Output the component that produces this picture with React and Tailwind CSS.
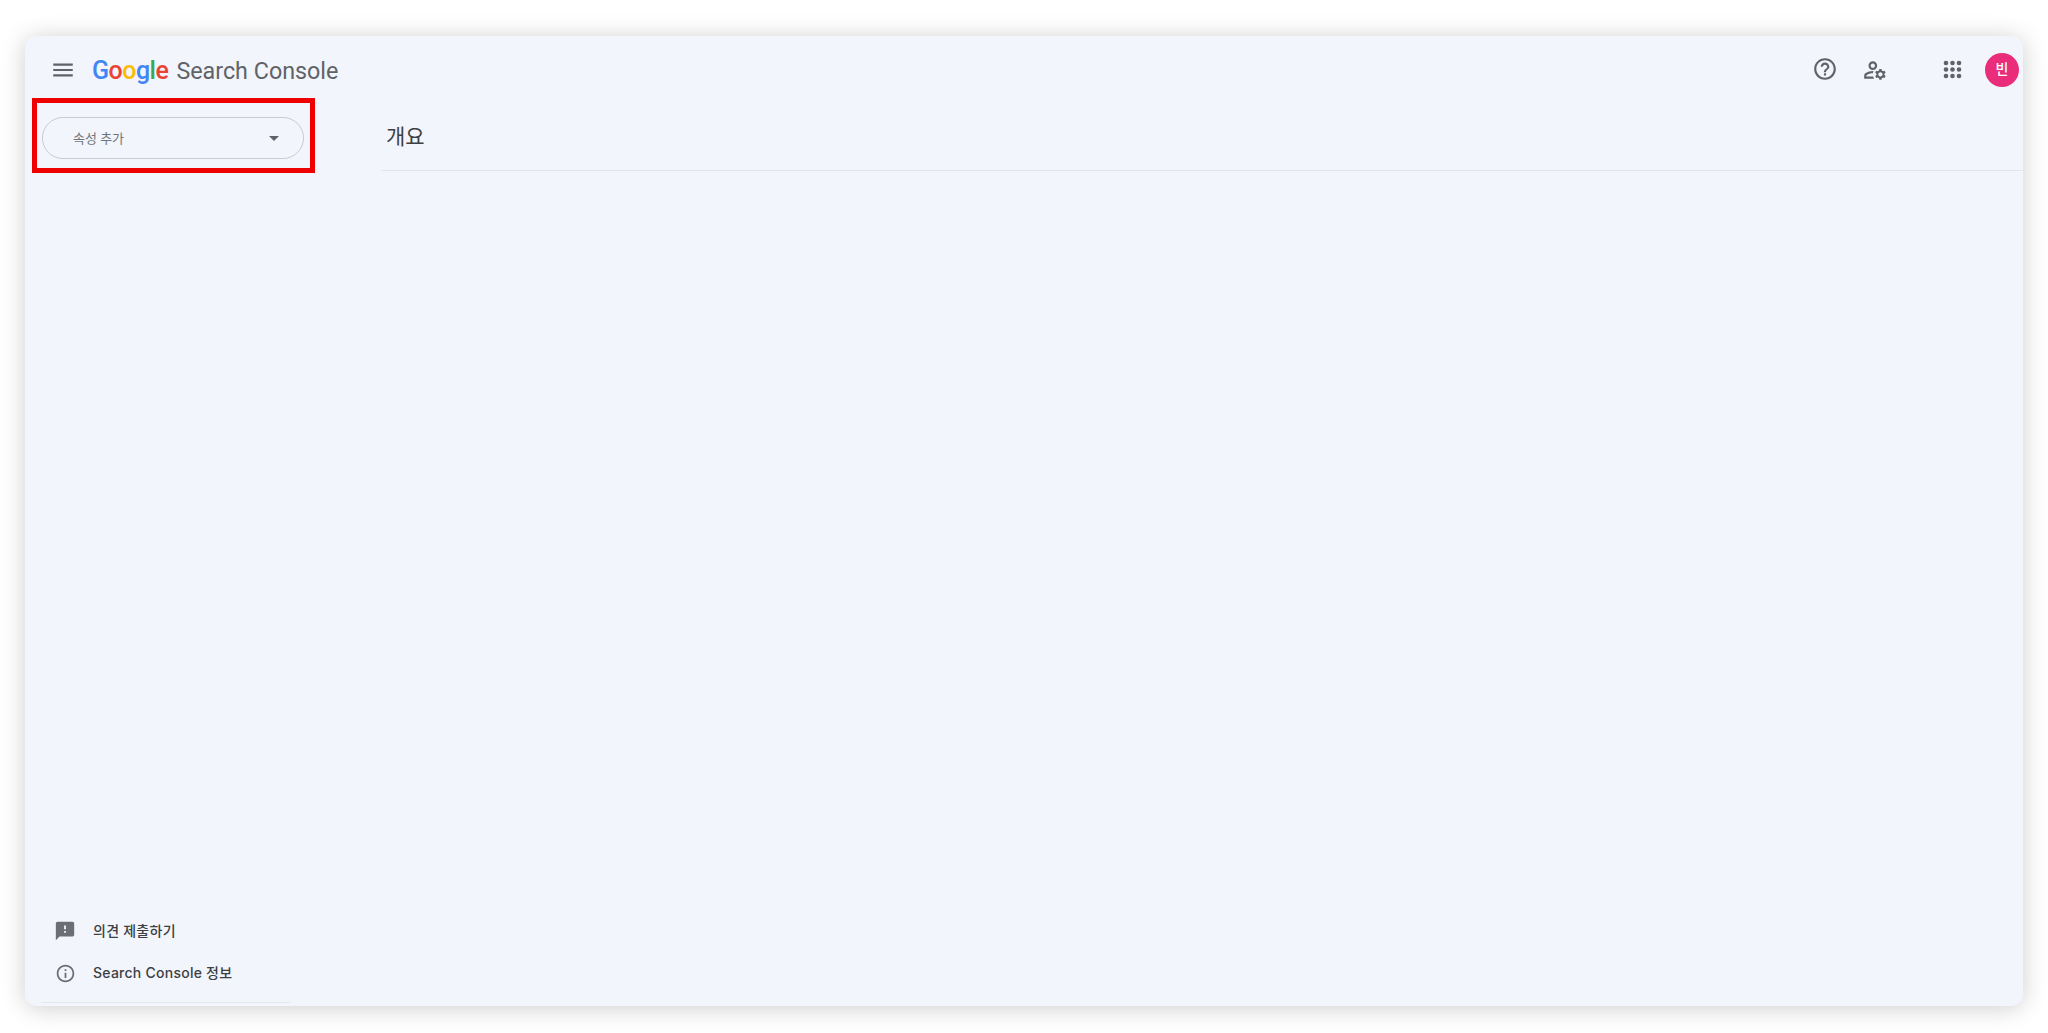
import React from "react";
import { MdMenu, MdHelpOutline, MdOutlineManageAccounts, MdFeedback, MdInfoOutline, MdArrowDropDown } from "react-icons/md";

const sans = "font-['Roboto','Noto_Sans_CJK_KR',sans-serif]";

function AppsIcon() {
  const pos = [6, 12.5, 19];
  return (
    <svg className="ml-[52px]" width="26" height="26" viewBox="0 0 26 26" fill="#5f6368">
      {pos.map((y) => pos.map((x) => <circle key={`${x}-${y}`} cx={x} cy={y} r="2.3" />))}
    </svg>
  );
}

function FooterItem({ icon, children }) {
  return (
    <div className="flex h-[42px] items-center">
      <div className="flex w-[68px] justify-end pr-[17px] text-[#6b6f74]">{icon}</div>
      <span className="-mt-[2px] font-['Inter','Noto_Sans_CJK_KR',sans-serif] text-[14px] font-medium tracking-[0.25px] text-[#3c4043]">{children}</span>
    </div>
  );
}

export default function App() {
  return (
    <div className={`h-[1033px] w-[2048px] overflow-hidden bg-white pt-[36px] pl-[25px] pr-[25px] ${sans}`}>
      <div className="flex h-[970px] w-[1998px] flex-col rounded-[12px] bg-[#f2f5fc] shadow-[0_2px_24px_rgba(0,0,0,0.2)]">
        <header className="flex h-[62px] shrink-0 items-center pt-[5px]">
          <MdMenu className="ml-[25px] text-[#5f6368]" size={26} />
          <div className="mt-[2px] ml-[16px] flex items-baseline">
            <span className="text-[25px] leading-none font-medium tracking-[-0.5px]">
              <span className="text-[#4285f4]">G</span>
              <span className="text-[#ea4335]">o</span>
              <span className="text-[#fbbc05]">o</span>
              <span className="text-[#4285f4]">g</span>
              <span className="text-[#34a853]">l</span>
              <span className="text-[#ea4335]">e</span>
            </span>
            <span className="ml-[8px] text-[23.3px] leading-none text-[#5f6368]">Search Console</span>
          </div>
          <div className="ml-auto flex items-center text-[#5f6368]">
            <MdHelpOutline className="-mt-[2px]" size={26} />
            <MdOutlineManageAccounts className="ml-[24px]" size={26} />
            <AppsIcon />
            <div className="mr-[4px] ml-[19px] flex h-[34px] w-[34px] items-center justify-center rounded-full bg-[#e92d7a] text-[14px] font-medium text-white">빈</div>
          </div>
        </header>
        <div className="flex min-h-0 flex-1">
          <aside className="flex w-[356px] shrink-0 flex-col">
            <div className="ml-[7px] w-[283px] border-[5px] border-[#ee0000] px-[5px] pt-[14px] pb-[9px]">
              <div className="flex h-[42px] w-[262px] items-center rounded-full border border-[#c8cbd0] pr-[17px] pl-[30px]">
                <span className="mt-px text-[13px] text-[#70757a]">속성 추가</span>
                <MdArrowDropDown className="ml-auto text-[#5f6368]" size={24} />
              </div>
            </div>
            <div className="mt-auto">
              <FooterItem icon={<MdFeedback size={22} />}>의견 제출하기</FooterItem>
              <FooterItem icon={<MdInfoOutline size={21} />}>Search Console 정보</FooterItem>
              <div className="mt-[8px] ml-[17px] mb-[3px] h-px w-[248px] bg-[#e3e6ea]" />
            </div>
          </aside>
          <main className="min-w-0 flex-1">
            <div className="flex h-[73px] items-center border-b border-[#e1e4e8] pt-[8px] pl-[5px]">
              <h1 className="text-[21px] text-[#3c4043]">개요</h1>
            </div>
          </main>
        </div>
      </div>
    </div>
  );
}
